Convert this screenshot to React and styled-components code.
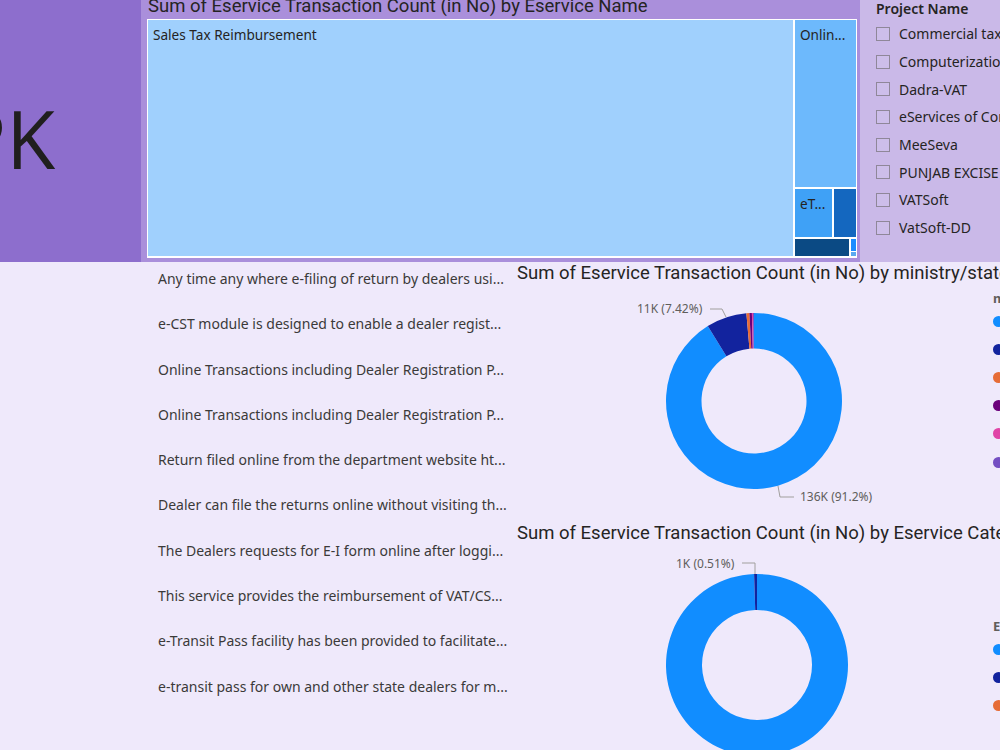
import React from "react";
import styled, { createGlobalStyle } from "styled-components";

const GlobalStyle = createGlobalStyle`
  html, body {
    margin: 0;
    padding: 0;
    background: #efe9fb;
    overflow: hidden;
  }
  * { box-sizing: border-box; }
`;

const TITLE_FONT = `"Roboto", "Noto Sans", sans-serif`;
const BODY_FONT = `"Noto Sans", "Open Sans", sans-serif`;

const COLORS = {
  blue: "#118dff",
  navy: "#12239e",
  orange: "#e66c37",
  plum: "#6b007b",
  pink: "#e044a7",
  violet: "#744ec2",
};

const services = [
  "Any time any where e-filing of return by dealers usi...",
  "e-CST module is designed to enable a dealer regist...",
  "Online Transactions including Dealer Registration P...",
  "Online Transactions including Dealer Registration P...",
  "Return filed online from the department website ht...",
  "Dealer can file the returns online without visiting th...",
  "The Dealers requests for E-I form online after loggi...",
  "This service provides the reimbursement of VAT/CS...",
  "e-Transit Pass facility has been provided to facilitate...",
  "e-transit pass for own and other state dealers for m...",
];

const projects = [
  "Commercial taxes",
  "Computerization",
  "Dadra-VAT",
  "eServices of Commercial",
  "MeeSeva",
  "PUNJAB EXCISE",
  "VATSoft",
  "VatSoft-DD",
];

const ministrySlices = [
  { value: 91.2, color: COLORS.blue },
  { value: 7.42, color: COLORS.navy },
  { value: 0.55, color: COLORS.orange },
  { value: 0.45, color: COLORS.plum },
  { value: 0.2, color: COLORS.pink },
  { value: 0.18, color: COLORS.violet },
];

const categorySlices = [
  { value: 99.49, color: COLORS.blue },
  { value: 0.51, color: COLORS.navy },
];

// ring segment between two angles, measured clockwise from 12 o'clock
function ringPath(cx, cy, inner, outer, a0, a1) {
  const pt = (r, a) => {
    const rad = (a * Math.PI) / 180;
    return [cx + r * Math.sin(rad), cy - r * Math.cos(rad)];
  };
  const large = a1 - a0 > 180 ? 1 : 0;
  const [x1, y1] = pt(outer, a0);
  const [x2, y2] = pt(outer, a1);
  const [x3, y3] = pt(inner, a1);
  const [x4, y4] = pt(inner, a0);
  return `M${x1} ${y1} A${outer} ${outer} 0 ${large} 1 ${x2} ${y2} L${x3} ${y3} A${inner} ${inner} 0 ${large} 0 ${x4} ${y4}Z`;
}

function Donut({ slices, cx, cy, inner, outer }) {
  let start = 0;
  return slices.map((s, i) => {
    const end = start + (s.value / 100) * 360;
    const d = ringPath(cx, cy, inner, outer, start, end);
    start = end;
    return <path key={i} d={d} fill={s.color} />;
  });
}

const Page = styled.div`
  width: 1000px;
  height: 750px;
  overflow: hidden;
  display: flex;
  flex-direction: column;
  background: #efe9fb;
`;

const TopBand = styled.div`
  height: 262px;
  display: flex;
  flex-shrink: 0;
`;

const KpiCard = styled.div`
  width: 141px;
  background: #8d6ecd;
  overflow: hidden;
  padding-top: 98px;
`;

const KpiValue = styled.div`
  margin-left: -42px;
  font-family: "Open Sans", sans-serif;
  font-size: 80px;
  line-height: 1;
  color: #201f1e;
  white-space: nowrap;
`;

const TreemapPanel = styled.div`
  width: 719px;
  background: #aa8fdb;
  padding: 0 3px 4px 6px;
  display: flex;
  flex-direction: column;
  overflow: hidden;
`;

const PanelTitle = styled.div`
  font-family: ${TITLE_FONT};
  font-size: 18.5px;
  line-height: 18px;
  margin-top: -3px;
  margin-left: 1px;
  height: 22px;
  color: #252423;
  white-space: nowrap;
`;

const Treemap = styled.div`
  flex: 1;
  min-height: 0;
  display: flex;
  gap: 2px;
  background: #fff;
  padding: 1px 1px 2px 1px;
`;

const Tile = styled.div`
  background: ${(p) => p.$bg};
  flex: ${(p) => p.$flex || "none"};
  width: ${(p) => (p.$w ? `${p.$w}px` : "auto")};
  min-height: 0;
  overflow: hidden;
`;

const TileLabel = styled.div`
  padding: 6px 5px;
  font-family: ${BODY_FONT};
  font-size: 13.6px;
  line-height: 18px;
  color: #252423;
  white-space: nowrap;
`;

const TileColumn = styled.div`
  width: 61px;
  display: flex;
  flex-direction: column;
  gap: 2px;
`;

const TileRow = styled.div`
  display: flex;
  gap: 2px;
  height: ${(p) => p.$h}px;
  flex-shrink: 0;
`;

const TinyStack = styled.div`
  flex: 1;
  display: flex;
  flex-direction: column;
  gap: 1px;
`;

const Slicer = styled.div`
  flex: 1;
  background: #cab9e8;
  padding: 0 0 0 16px;
  overflow: hidden;
  font-family: ${BODY_FONT};
  color: #252423;
`;

const SlicerHeader = styled.div`
  font-size: 14px;
  font-weight: 600;
  line-height: 18px;
  height: 20px;
  white-space: nowrap;
`;

const SlicerItem = styled.div`
  display: flex;
  align-items: center;
  gap: 9px;
  height: 27.7px;
  font-size: 14px;
  white-space: nowrap;
`;

const Checkbox = styled.span`
  width: 14px;
  height: 14px;
  flex-shrink: 0;
  border: 1px solid #8f8799;
  background: #cdbeea;
`;

const BottomArea = styled.div`
  flex: 1;
  display: flex;
`;

const ServiceList = styled.div`
  width: 517px;
  flex-shrink: 0;
  padding: 6px 0 0 158px;
  display: flex;
  flex-direction: column;
`;

const ServiceRow = styled.div`
  height: 45.3px;
  font-family: ${BODY_FONT};
  font-size: 14px;
  line-height: 22px;
  color: #3b3a39;
  white-space: nowrap;
`;

const ChartColumn = styled.div`
  flex: 1;
  display: flex;
  flex-direction: column;
  overflow: hidden;
`;

const Visual = styled.div`
  height: ${(p) => p.$h}px;
  flex-shrink: 0;
  display: flex;
  flex-direction: column;
`;

const VisualTitle = styled.div`
  font-family: ${TITLE_FONT};
  font-size: 18.5px;
  line-height: 22px;
  height: 22px;
  color: #252423;
  white-space: nowrap;
`;

const VisualBody = styled.div`
  flex: 1;
  display: flex;
`;

const ChartSvg = styled.svg`
  width: 476px;
  flex-shrink: 0;
  display: block;
`;

const Legend = styled.div`
  padding-top: ${(p) => p.$top}px;
  font-family: ${BODY_FONT};
  white-space: nowrap;
`;

const LegendTitle = styled.div`
  font-size: 13px;
  font-weight: 700;
  line-height: 16px;
  height: 16px;
  margin-bottom: 1px;
  color: #605e5c;
`;

const LegendItem = styled.div`
  height: 28.2px;
  display: flex;
  align-items: center;
`;

const Dot = styled.span`
  width: 11px;
  height: 11px;
  border-radius: 50%;
  background: ${(p) => p.$c};
`;

const LabelText = styled.text`
  font-family: ${BODY_FONT};
  font-size: 12px;
  fill: #605e5c;
`;

const Leader = styled.polyline`
  fill: none;
  stroke: #a19f9d;
  stroke-width: 1;
`;

export default function App() {
  return (
    <Page>
      <GlobalStyle />
      <TopBand>
        <KpiCard>
          <KpiValue>PK</KpiValue>
        </KpiCard>

        <TreemapPanel>
          <PanelTitle>Sum of Eservice Transaction Count (in No) by Eservice Name</PanelTitle>
          <Treemap>
            <Tile $flex="1" $bg="#a0d0fd">
              <TileLabel>Sales Tax Reimbursement</TileLabel>
            </Tile>
            <TileColumn>
              <Tile $flex="1" $bg="#6db9fc">
                <TileLabel>Onlin...</TileLabel>
              </Tile>
              <TileRow $h={48}>
                <Tile $w={37} $bg="#3fa1f6">
                  <TileLabel>eT...</TileLabel>
                </Tile>
                <Tile $flex="1" $bg="#1467bf" />
              </TileRow>
              <TileRow $h={17}>
                <Tile $w={54} $bg="#0b4a84" />
                <TinyStack>
                  <Tile $flex="3" $bg="#1a8cff" />
                  <Tile $flex="1" $bg="#5aa9f0" />
                </TinyStack>
              </TileRow>
            </TileColumn>
          </Treemap>
        </TreemapPanel>

        <Slicer>
          <SlicerHeader>Project Name</SlicerHeader>
          {projects.map((name) => (
            <SlicerItem key={name}>
              <Checkbox />
              {name}
            </SlicerItem>
          ))}
        </Slicer>
      </TopBand>

      <BottomArea>
        <ServiceList>
          {services.map((s, i) => (
            <ServiceRow key={i}>{s}</ServiceRow>
          ))}
        </ServiceList>

        <ChartColumn>
          <Visual $h={260}>
            <VisualTitle>Sum of Eservice Transaction Count (in No) by ministry/state</VisualTitle>
            <VisualBody>
              <ChartSvg viewBox="0 0 476 238">
                <Donut slices={ministrySlices} cx={237} cy={117} inner={52.5} outer={88} />
                <Leader points="193,25 205,25 209,33" />
                <LabelText x="120" y="29">11K (7.42%)</LabelText>
                <Leader points="261,202 263,213 277,213" />
                <LabelText x="283" y="217">136K (91.2%)</LabelText>
              </ChartSvg>
              <Legend $top={6}>
                <LegendTitle>ministry/state</LegendTitle>
                {ministrySlices.map((s) => (
                  <LegendItem key={s.color}>
                    <Dot $c={s.color} />
                  </LegendItem>
                ))}
              </Legend>
            </VisualBody>
          </Visual>

          <Visual $h={228}>
            <VisualTitle>Sum of Eservice Transaction Count (in No) by Eservice Category</VisualTitle>
            <VisualBody>
              <ChartSvg viewBox="0 0 476 206">
                <Donut slices={categorySlices} cx={240} cy={121} inner={55} outer={91} />
                <Leader points="225,19 238,19 238,30" />
                <LabelText x="159" y="24">1K (0.51%)</LabelText>
              </ChartSvg>
              <Legend $top={74}>
                <LegendTitle>Eservice Category</LegendTitle>
                {[COLORS.blue, COLORS.navy, COLORS.orange].map((c) => (
                  <LegendItem key={c}>
                    <Dot $c={c} />
                  </LegendItem>
                ))}
              </Legend>
            </VisualBody>
          </Visual>
        </ChartColumn>
      </BottomArea>
    </Page>
  );
}
